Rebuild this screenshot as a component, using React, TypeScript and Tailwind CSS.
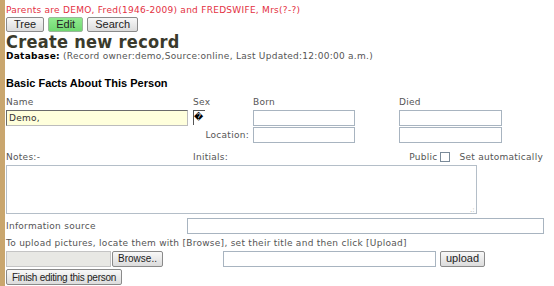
import React from 'react';

const btnBase =
  "h-[15px] leading-[13px] text-[#222] border rounded-[2px] bg-gradient-to-b whitespace-nowrap font-['Liberation_Sans',Arial,sans-serif]";
const btn = `${btnBase} border-[#8a8a8a] from-[#f8f8f8] to-[#dcdcdc]`;
const btnGreen = `${btnBase} border-[#9ab89a] from-[#90ea90] to-[#70d870]`;

const input = 'h-[16px] border border-[#a8b4c0] bg-white';

const App: React.FC = () => {
  return (
    <div className="w-[554px] h-[286px] overflow-hidden bg-white border-l-[5px] border-[#c9a66e] font-['DejaVu_Sans',Verdana,sans-serif] text-[9px] text-[#555]">
      <div className="pl-[1px] tracking-[0.27px]">
        <div className="h-[16px] pt-[5px] leading-[11px] text-[#e3303f]">
          Parents are DEMO, Fred(1946-2009) and FREDSWIFE, Mrs(?-?)
        </div>
        <div className="flex gap-[4px] mt-[1px]">
          <button className={`${btn} px-[7px] text-[11px] tracking-normal`}>Tree</button>
          <button className={`${btnGreen} px-[7px] text-[11px] tracking-normal`}>Edit</button>
          <button className={`${btn} px-[7px] text-[11px] tracking-normal`}>Search</button>
        </div>
        <h1 className="mt-[1px] h-[18px] leading-[18px] text-[18px] font-bold text-[#3a3a2c] tracking-[0.3px] font-['DejaVu_Sans_Condensed','DejaVu_Sans',sans-serif]">
          Create new record
        </h1>
        <div className="h-[10px] leading-[10px]">
          <span className="font-bold text-black">Database:</span> (Record owner:demo,Source:online, Last Updated:12:00:00 a.m.)
        </div>
        <h2 className="mt-[16px] h-[12px] leading-[12px] text-[11px] font-bold text-black tracking-normal font-['Liberation_Sans',Arial,sans-serif]">
          Basic Facts About This Person
        </h2>

        <div className="grid grid-cols-[187px_60px_146px_1fr] mt-[7px]">
          <div className="h-[13px] leading-[13px]">Name</div>
          <div className="h-[13px] leading-[13px]">Sex</div>
          <div className="h-[13px] leading-[13px]">Born</div>
          <div className="h-[13px] leading-[13px]">Died</div>

          <div className="h-[18px] pt-[1px]">
            <div className="h-[16px] w-[182px] border border-[#bcbcbc] border-t-[#6a6a6a] border-l-[#6a6a6a] bg-[#ffffdc] pl-[2px] leading-[14px] text-[#333]">
              Demo,
            </div>
          </div>
          <div className="h-[18px] pt-[1px]">
            <div className="h-[15px] w-[12px] border-l border-t border-[#555] bg-white text-[9px] leading-[12px] text-black">
              �
            </div>
          </div>
          <div className="h-[18px] pt-[1px]">
            <div className={`${input} w-[102px]`} />
          </div>
          <div className="h-[18px] pt-[1px]">
            <div className={`${input} w-[103px]`} />
          </div>

          <div className="col-span-2 h-[18px] pr-[4px] text-right leading-[16px]">Location:</div>
          <div className="h-[18px]">
            <div className={`${input} w-[102px]`} />
          </div>
          <div className="h-[18px]">
            <div className={`${input} w-[103px]`} />
          </div>
        </div>

        <div className="flex items-center h-[16px] mt-[4px] leading-[12px]">
          <div className="w-[187px]">Notes:-</div>
          <div>Initials:</div>
          <div className="ml-auto flex items-center pr-[11px]">
            <span>Public</span>
            <span className="ml-[3px] w-[10px] h-[10px] border border-[#7a8a99] bg-white" />
            <span className="ml-[9px]">Set automatically</span>
          </div>
        </div>

        <div className="relative w-[471px] h-[49px] border border-[#b4bec8] bg-white">
          <span className="absolute right-[1px] bottom-[-1px] text-[7px] leading-[7px] text-[#aaa]">.:</span>
        </div>

        <div className="flex items-center h-[16px] mt-[4px]">
          <div className="w-[181px] leading-[12px]">Information source</div>
          <div className={`${input} w-[357px]`} />
        </div>

        <div className="mt-[3px] h-[12px] leading-[12px]">
          To upload pictures, locate them with [Browse], set their title and then click [Upload]
        </div>

        <div className="flex items-center h-[17px] mt-[1px]">
          <div className="w-[105px] h-[16px] border border-[#c4c4c4] bg-[#e8e8e4]" />
          <button className={`${btn} ml-[1px] h-[16px] w-[51px] px-0 text-[10px] tracking-normal`}>Browse..</button>
          <div className={`${input} ml-[60px] w-[213px]`} />
          <button className={`${btn} ml-[4px] h-[16px] w-[45px] px-0 text-[11px] tracking-normal`}>upload</button>
        </div>

        <div className="mt-[2px]">
          <button className={`${btn} h-[16px] px-[5px] text-[10px] tracking-[-0.25px]`}>Finish editing this person</button>
        </div>
      </div>
    </div>
  );
};

export default App;
